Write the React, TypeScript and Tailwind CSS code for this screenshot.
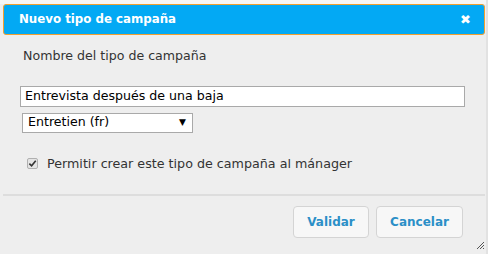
import React from "react";

export default function App() {
  const font = { fontFamily: '"DejaVu Sans", Verdana, sans-serif' };
  return (
    <div className="w-[488px] h-[254px] bg-[#eeeeee] relative overflow-hidden text-[#333]" style={font}>
      <div className="h-[4px] bg-[#f6f6f6]" />
      <div className="mx-[3px] h-[31px] rounded-[3px] border border-[#f0a030] bg-[#03a9f4] flex items-center justify-between pl-[15px] pr-[13px]">
        <span className="text-white font-bold text-[11.8px]">Nuevo tipo de campaña</span>
        <span className="text-white font-bold text-[13px] leading-none">✖</span>
      </div>
      <div className="pl-[23px] pt-[12px] text-[12.6px] text-[#333]">Nombre del tipo de campaña</div>
      <div className="pl-[20px] pt-[20px] pr-[23px]">
        <div className="h-[21px] border border-[#a9a9a9] bg-white flex items-center pl-[4px] text-[12.6px] text-black">
          Entrevista después de una baja
        </div>
      </div>
      <div className="pl-[22px] pt-[6px]">
        <div className="w-[171px] h-[20px] border border-[#a9a9a9] bg-white flex items-center justify-between pl-[5px] pr-[6px] text-[12.6px] text-black">
          <span>Entretien (fr)</span>
          <span className="text-[9px]">▼</span>
        </div>
      </div>
      <div className="pl-[27px] pt-[21px] flex items-center gap-[9px]">
        <div className="w-[11px] h-[11px] border border-[#b0b0b0] rounded-[2px] bg-[#e4e4e4] flex items-center justify-center">
          <svg width="9" height="9" viewBox="0 0 10 10">
            <path d="M1.5 5.2 L4 7.6 L8.6 2" stroke="#333" strokeWidth="1.8" fill="none" />
          </svg>
        </div>
        <span className="text-[12.7px] text-[#333]">Permitir crear este tipo de campaña al mánager</span>
      </div>
      <div className="mx-[3px] mt-[21px] h-[2px] bg-[#dddddd]" />
      <div className="flex justify-end gap-[7px] pr-[25px] pt-[10px]">
        <button className="w-[76px] h-[32px] rounded-[4px] border border-[#d4d4d4] bg-[#f7f7f7] text-[#2b8fc7] font-bold text-[12px]">Validar</button>
        <button className="w-[87px] h-[32px] rounded-[4px] border border-[#d4d4d4] bg-[#f7f7f7] text-[#2b8fc7] font-bold text-[12px]">Cancelar</button>
      </div>
      <svg className="absolute right-[3px] bottom-[4px]" width="10" height="10" viewBox="0 0 10 10">
        <path d="M9 2 L2 9 M9 5 L5 9 M9 8 L8 9" stroke="#555" strokeWidth="1" />
      </svg>
      <div className="absolute right-0 top-0 w-[2px] h-full bg-[#e2e2e2]" />
    </div>
  );
}
